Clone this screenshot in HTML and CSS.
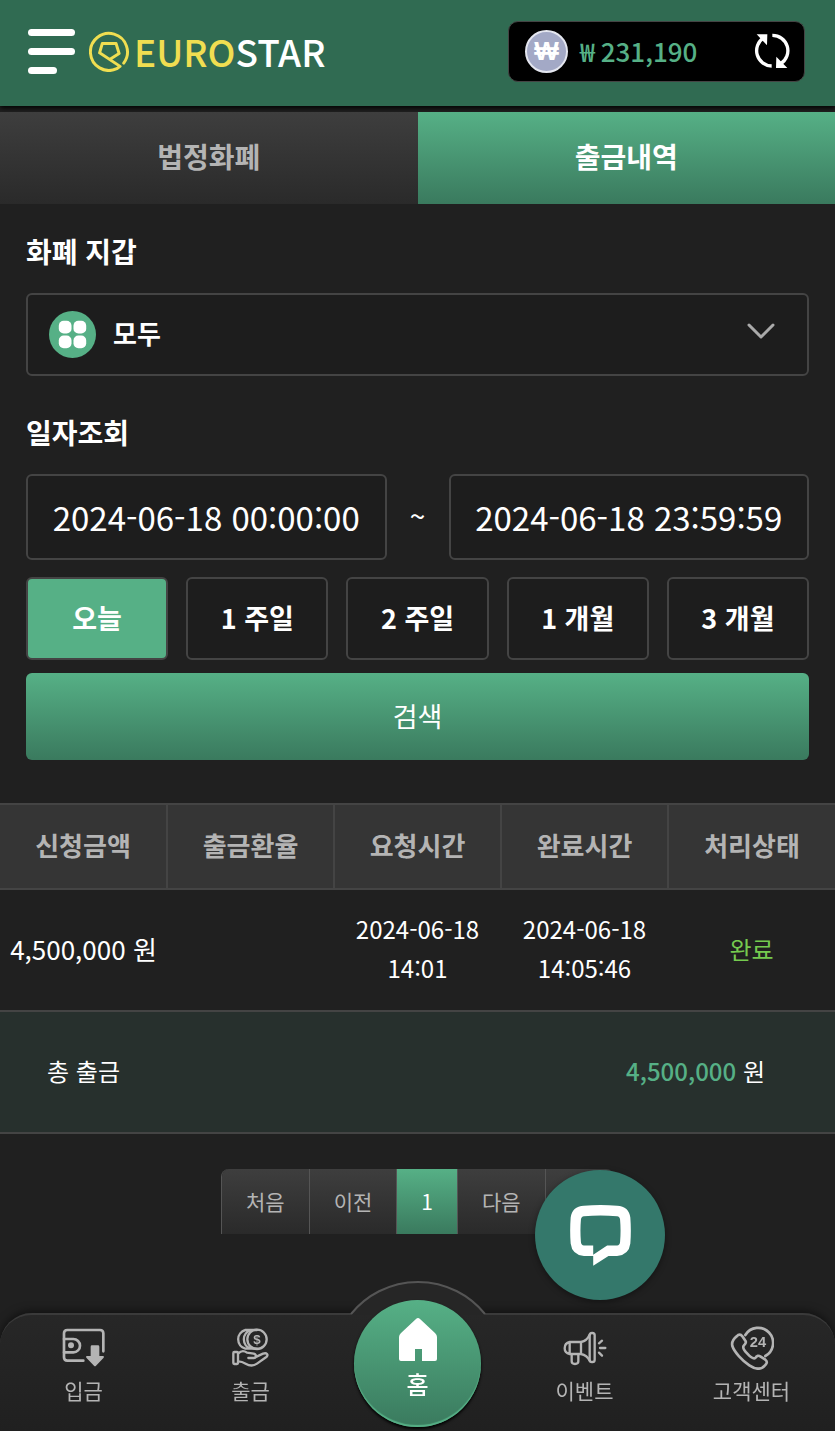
FILE: index.html
```html
<!DOCTYPE html>
<html lang="ko">

<head>
    <meta charset="UTF-8">
    <meta name="viewport" content="width=device-width, initial-scale=1">
    <title>EUROSTAR</title>
    <link rel="stylesheet" href="styles.css">
</head>

<body>
    <!-- header -->
    <header class="header">
        <button type="button" class="menuBtn" aria-label="메뉴">
            <span></span>
            <span></span>
            <span></span>
        </button>
        <a href="#" class="logo">
            <svg class="logoIcon" viewBox="0 0 124 124" fill="none" stroke="currentColor" stroke-width="9" stroke-linecap="round" stroke-linejoin="round">
                <path d="M105 97A56 56 0 1 0 84 114L94 107L32 66L40 38H82L91 68L66 84" />
            </svg>
            <span class="logoText">EURO<span class="logoSub">STAR</span></span>
        </a>
        <div class="balance">
            <span class="coin">₩</span>
            <span class="balanceNum">₩ 231,190</span>
            <button type="button" class="refreshBtn" aria-label="새로고침">
                <svg viewBox="0 0 108 108" fill="none" stroke="currentColor" stroke-width="10">
                    <path d="M53 99A46 46 0 0 1 28 15" />
                    <path d="M55 7A46 46 0 0 1 80 92" />
                    <path d="M8 4H40L39 37ZM100 105H66L67 71Z" fill="currentColor" stroke="none" />
                </svg>
            </button>
        </div>
    </header>

    <main>
        <!-- tab -->
        <nav class="tab">
            <a href="#">법정화폐</a>
            <a href="#" class="on">출금내역</a>
        </nav>

        <!-- search -->
        <form class="search">
            <label class="label" for="wallet">화폐 지갑</label>
            <div class="selectBox">
                <svg class="allIcon" viewBox="0 0 48 48">
                    <circle cx="24" cy="24" r="24" fill="#56b086" />
                    <g fill="#fff">
                        <rect x="10" y="10" width="13" height="13" rx="5" />
                        <rect x="25" y="10" width="13" height="13" rx="5" />
                        <rect x="10" y="25" width="13" height="13" rx="5" />
                        <rect x="25" y="25" width="13" height="13" rx="5" />
                    </g>
                </svg>
                <select id="wallet">
                    <option>모두</option>
                </select>
                <svg class="arrow" viewBox="0 0 28 18" fill="none" stroke="currentColor" stroke-width="3" stroke-linecap="round" stroke-linejoin="round">
                    <path d="M2 3L14 15L26 3" />
                </svg>
            </div>

            <label class="label" for="startDate">일자조회</label>
            <div class="dateRow">
                <input type="text" id="startDate" value="2024-06-18 00:00:00">
                <span>~</span>
                <input type="text" id="endDate" value="2024-06-18 23:59:59" aria-label="종료일">
            </div>
            <div class="periodRow">
                <button type="button" class="on">오늘</button>
                <button type="button">1 주일</button>
                <button type="button">2 주일</button>
                <button type="button">1 개월</button>
                <button type="button">3 개월</button>
            </div>
            <button type="submit" class="searchBtn">검색</button>
        </form>

        <!-- list -->
        <table class="list">
            <thead>
                <tr>
                    <th>신청금액</th>
                    <th>출금환율</th>
                    <th>요청시간</th>
                    <th>완료시간</th>
                    <th>처리상태</th>
                </tr>
            </thead>
            <tbody>
                <tr>
                    <td class="amount">4,500,000 원</td>
                    <td></td>
                    <td>2024-06-18 14:01</td>
                    <td>2024-06-18 14:05:46</td>
                    <td class="done">완료</td>
                </tr>
            </tbody>
            <tfoot>
                <tr>
                    <td>총 출금</td>
                    <td colspan="4" class="total"><strong>4,500,000</strong> 원</td>
                </tr>
            </tfoot>
        </table>

        <!-- paging -->
        <nav class="paging">
            <a href="#">처음</a>
            <a href="#">이전</a>
            <a href="#" class="on">1</a>
            <a href="#">다음</a>
            <a href="#">끝</a>
        </nav>
    </main>

    <!-- chat -->
    <button type="button" class="chatBtn" aria-label="채팅">
        <svg viewBox="0 0 184 184">
            <path fill="#fff" fill-rule="evenodd" d="M42 2Q92 -2 142 2Q178 4 182 38Q185 78 182 116Q178 150 142 154H116L70 183V154H42Q6 150 2 116Q-1 78 2 38Q6 4 42 2ZM42 34Q34 35 33 44Q30 78 33 112Q34 121 42 122H70V150L112 122H142Q150 121 151 112Q154 78 151 44Q150 35 142 34Q92 30 42 34Z" />
        </svg>
    </button>

    <!-- bottom menu -->
    <nav class="bottomMenu">
        <a href="#">
            <svg class="icon" viewBox="0 0 132 132" fill="none" stroke="currentColor" stroke-width="8" stroke-linecap="round">
                <path d="M64 104H16Q6 104 6 94V22Q6 12 16 12H114Q124 12 124 22V76" />
                <path d="M6 39H34A20 20 0 0 1 34 79H6" />
                <circle cx="27" cy="58" r="9" fill="currentColor" stroke="none" />
                <path d="M90 58H108Q112 58 112 62V90H123Q128 91 125 95L102 119Q99 122 96 119L73 95Q70 91 75 90H86V62Q86 58 90 58Z" fill="currentColor" stroke="none" />
            </svg>
            <span>입금</span>
        </a>
        <a href="#">
            <svg class="icon" viewBox="0 0 132 132" fill="none" stroke="currentColor" stroke-width="7" stroke-linecap="round" stroke-linejoin="round">
                <circle cx="84" cy="40" r="29" />
                <path d="M66 12A29 29 0 0 0 66 68M49 12A29 29 0 0 0 49 68M49 12H84M49 68H84" />
                <rect x="13" y="78" width="14" height="36" rx="3" />
                <path d="M28 82C36 74 46 74 54 80L74 83C84 86 82 96 74 96H58M78 94L102 83C113 79 120 86 112 93L84 113C74 120 60 119 50 113C42 108 36 106 28 106" />
                <text class="iconText" x="84" y="54" font-size="40" text-anchor="middle" fill="currentColor" stroke="none">$</text>
            </svg>
            <span>출금</span>
        </a>
        <a href="#" class="home">
            <svg class="hill" viewBox="0 0 138 35" fill="none">
                <path d="M2 34A86 86 0 0 1 136 34V35H2Z" fill="#262626" />
                <path d="M2 34A86 86 0 0 1 136 34" stroke="#555" stroke-width="2" />
            </svg>
            <span class="homeCircle">
                <svg class="homeIcon" viewBox="0 0 38 43">
                    <path d="M17 1Q19 -1 21 1L36 15Q38 17 38 19V41Q38 43 36 43H23V31H16V43H2Q0 43 0 41V19Q0 17 2 15Z" fill="#fff" />
                </svg>
                <span>홈</span>
            </span>
        </a>
        <a href="#">
            <svg class="icon" viewBox="0 0 132 132" fill="none" stroke="currentColor" stroke-width="7" stroke-linecap="round" stroke-linejoin="round">
                <path d="M20 48C10 50 5 56 5 67C5 78 10 82 20 84M20 48V84H54V48ZM54 48Q72 44 80 26M54 84Q72 88 80 104M26 84V106Q26 114 36 114Q46 114 46 106V84" />
                <rect x="80" y="21" width="15" height="87" rx="7" />
                <path d="M108 52L117 44M111 66H127M108 80L117 89" />
            </svg>
            <span>이벤트</span>
        </a>
        <a href="#">
            <svg class="icon" viewBox="0 0 132 132" fill="none" stroke="currentColor" stroke-width="8" stroke-linecap="round" stroke-linejoin="round">
                <path d="M46 27A45 45 0 1 1 106 90" />
                <path d="M20 31C26 24 32 24 37 31L47 46C49 51 47 54 41 59C37 65 42 73 52 83C62 94 70 100 76 96C80 88 86 88 92 92L106 101C112 106 112 111 106 117C94 132 76 130 58 118C36 103 13 78 7 60C4 47 11 38 20 31Z" />
                <text class="iconText" x="84" y="64" font-size="44" text-anchor="middle" fill="currentColor" stroke="none">24</text>
            </svg>
            <span>고객센터</span>
        </a>
    </nav>
</body>

</html>
```

FILE: styles.css
```css
/* reset */
* {
    margin: 0;
    padding: 0;
    box-sizing: border-box;
}

html {
    background-color: #202020;
}

body {
    min-height: 100vh;
    padding-bottom: 150px;
    font-family: 'Noto Sans CJK KR', sans-serif;
    font-size: 24px;
    color: #fff;
}

a {
    color: inherit;
    text-decoration: none;
}

button,
input,
select {
    font-family: inherit;
    color: #fff;
}

button {
    border: 0;
    background: none;
    cursor: pointer;
}

svg {
    display: block;
}

/* header */
.header {
    display: flex;
    align-items: center;
    height: 106px;
    padding: 0 30px 4px 28px;
    background-color: #306b52;
    box-shadow: 0 2px 5px #000;
}

.menuBtn {
    display: flex;
    flex-direction: column;
    gap: 12px;
    width: 47px;
}

.menuBtn span {
    width: 100%;
    height: 7px;
    border-radius: 4px;
    background-color: #fff;
}

.menuBtn span:last-child {
    width: 29px;
}

.logo {
    display: flex;
    align-items: center;
    gap: 4px;
    margin-left: 14px;
    color: #f0de51;
}

.logoIcon {
    width: 41px;
    height: 41px;
}

.logoText {
    font-size: 37px;
    font-weight: 500;
    line-height: 56px;
}

.logoSub {
    color: #fff;
}

.balance {
    display: flex;
    align-items: center;
    width: 297px;
    height: 61px;
    margin-left: auto;
    padding: 0 14px 0 16px;
    border: 1px solid #444;
    border-radius: 10px;
    background-color: #000;
}

.coin {
    width: 43px;
    height: 43px;
    border: 2px solid #e4e6ef;
    border-radius: 50%;
    background-color: #a3a9c6;
    font-family: 'Liberation Sans', sans-serif;
    font-size: 26px;
    font-weight: 700;
    line-height: 39px;
    text-align: center;
}

.balanceNum {
    margin-left: 12px;
    font-size: 26px;
    font-weight: 500;
    line-height: 40px;
    color: #56b086;
}

.refreshBtn {
    width: 36px;
    height: 36px;
    margin-left: auto;
}

/* tab */
.tab {
    display: flex;
    margin-top: 6px;
}

.tab a {
    flex: 1;
    height: 92px;
    font-size: 28px;
    font-weight: 700;
    line-height: 88px;
    text-align: center;
    color: #b4b4b4;
    background: linear-gradient(#3e3e3e, #2a2a2a);
}

.tab a.on {
    color: #fff;
    background: linear-gradient(#56b086, #3a7a5e);
}

/* search */
.search {
    padding: 24px 26px 0;
}

.label {
    display: block;
    margin-bottom: 19px;
    font-size: 28px;
    font-weight: 700;
    line-height: 46px;
}

.selectBox {
    position: relative;
    margin-bottom: 33px;
}

.selectBox select {
    display: block;
    width: 100%;
    height: 83px;
    padding: 0 80px 4px 85px;
    border: 2px solid #444;
    border-radius: 6px;
    background-color: #1d1d1d;
    font-size: 26px;
    font-weight: 700;
    appearance: none;
}

.allIcon {
    position: absolute;
    top: 18px;
    left: 23px;
    width: 47px;
    height: 47px;
}

.arrow {
    position: absolute;
    top: 29px;
    right: 34px;
    width: 28px;
    height: 18px;
    color: #aaa;
    pointer-events: none;
}

.dateRow {
    display: flex;
    align-items: center;
    margin-bottom: 17px;
}

.dateRow input {
    flex: 1;
    min-width: 0;
    height: 86px;
    border: 2px solid #444;
    border-radius: 6px;
    background-color: #1d1d1d;
    font-size: 33px;
    text-align: center;
}

.dateRow span {
    width: 62px;
    padding-bottom: 4px;
    font-size: 28px;
    text-align: center;
}

.periodRow {
    display: flex;
    gap: 18px;
    margin-bottom: 13px;
}

.periodRow button {
    flex: 1;
    height: 83px;
    padding-bottom: 2px;
    border: 2px solid #444;
    border-radius: 6px;
    background-color: #1d1d1d;
    font-size: 27px;
    font-weight: 700;
}

.periodRow button.on {
    background-color: #56b086;
}

.searchBtn {
    display: block;
    width: 100%;
    height: 87px;
    padding-bottom: 2px;
    border-radius: 6px;
    background: linear-gradient(#56b086, #3a7a5e);
    font-size: 27px;
}

/* list */
.list {
    width: 100%;
    margin-top: 43px;
    border-collapse: collapse;
    table-layout: fixed;
    line-height: 39px;
    text-align: center;
}

.list tr {
    border-top: 2px solid #444;
    border-bottom: 2px solid #444;
}

.list th {
    height: 85px;
    padding-bottom: 4px;
    background-color: #353535;
    font-size: 26px;
    color: #b4b4b4;
}

.list th:not(:last-child) {
    border-right: 2px solid #444;
}

.list td {
    height: 122px;
    padding: 0 10px 4px;
}

.list .amount {
    padding: 0 0 4px;
    font-size: 26px;
}

.list .done {
    color: #75ca4f;
}

.list tfoot {
    background-color: #27302d;
}

.list .total {
    padding-right: 70px;
    text-align: right;
}

.total strong {
    font-weight: 500;
    color: #56b086;
}

/* paging */
.paging {
    display: flex;
    width: max-content;
    margin: 35px auto 0;
    border-left: 1px solid #555;
    border-radius: 8px 8px 0 0;
    overflow: hidden;
}

.paging a {
    padding: 0 24px;
    border-right: 1px solid #555;
    font-size: 21px;
    line-height: 65px;
    color: #b4b4b4;
    background: linear-gradient(#3e3e3e, #2a2a2a);
}

.paging a.on {
    color: #fff;
    background: linear-gradient(#56b086, #3a7a5e);
}

/* chat */
.chatBtn {
    position: fixed;
    right: 170px;
    bottom: 131px;
    display: flex;
    align-items: center;
    justify-content: center;
    width: 130px;
    height: 130px;
    border-radius: 50%;
    background-color: #34786b;
    box-shadow: 0 2px 6px rgba(0, 0, 0, 0.4);
}

.chatBtn svg {
    width: 61px;
    height: 61px;
}

/* bottom menu */
.bottomMenu {
    position: fixed;
    right: 0;
    bottom: 0;
    left: 0;
    display: flex;
    height: 118px;
    border-top: 2px solid #3a3a3a;
    border-radius: 32px 32px 0 0;
    background: linear-gradient(#272727, #202020);
    box-shadow: 0 -2px 8px rgba(0, 0, 0, 0.5);
}

.bottomMenu a {
    flex: 1;
    display: flex;
    flex-direction: column;
    align-items: center;
    padding-top: 11px;
    font-size: 21px;
    line-height: 40px;
    color: #b4b4b4;
}

.icon {
    width: 44px;
    height: 44px;
}

.iconText {
    font-family: 'Liberation Sans', sans-serif;
    font-weight: 700;
}

.bottomMenu .home {
    position: relative;
    padding: 0;
    color: #fff;
}

.hill {
    position: absolute;
    top: -35px;
    width: 138px;
    height: 35px;
}

.homeCircle {
    position: absolute;
    top: -15px;
    display: flex;
    flex-direction: column;
    align-items: center;
    gap: 3px;
    width: 127px;
    height: 127px;
    padding-top: 18px;
    border-radius: 50%;
    background: linear-gradient(#56b086, #3a7a5e);
    box-shadow: 0 2px 3px #000, inset 0 -2px 1px #56b086;
    font-size: 24px;
    font-weight: 500;
}

.homeIcon {
    width: 38px;
    height: 43px;
}
```
